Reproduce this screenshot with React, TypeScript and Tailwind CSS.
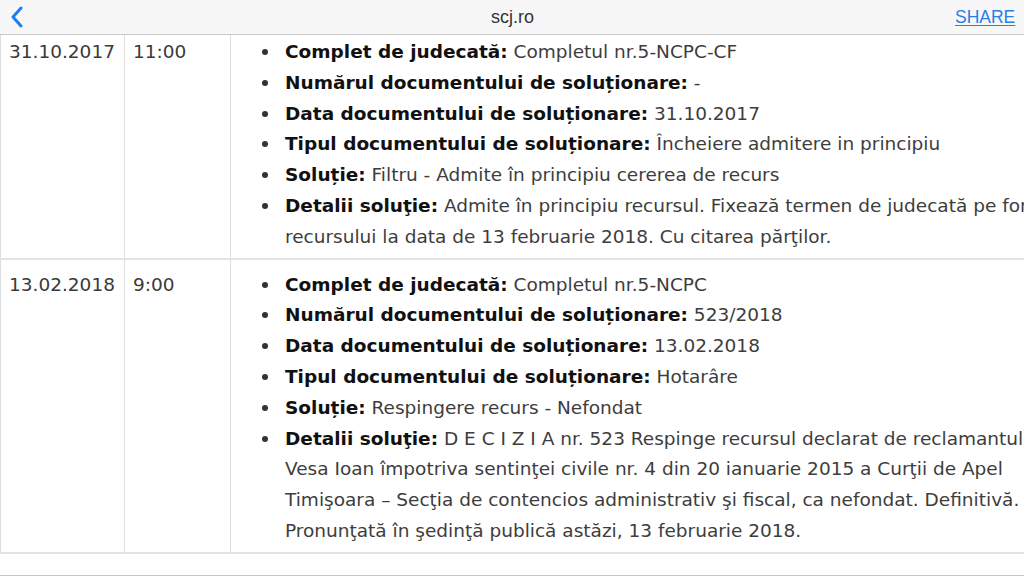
import type { ReactNode } from "react";

type Entry = {
  label: string;
  value: ReactNode;
};

type Session = {
  date: string;
  time: string;
  entries: Entry[];
  padTop: string;
};

const sessions: Session[] = [
  {
    date: "31.10.2017",
    time: "11:00",
    padTop: "pt-[2px]",
    entries: [
      { label: "Complet de judecată:", value: "Completul nr.5-NCPC-CF" },
      { label: "Numărul documentului de soluționare:", value: "-" },
      { label: "Data documentului de soluționare:", value: "31.10.2017" },
      {
        label: "Tipul documentului de soluționare:",
        value: "Încheiere admitere in principiu",
      },
      {
        label: "Soluție:",
        value: "Filtru - Admite în principiu cererea de recurs",
      },
      {
        label: "Detalii soluţie:",
        value:
          "Admite în principiu recursul. Fixează termen de judecată pe fondul recursului la data de 13 februarie 2018. Cu citarea părţilor.",
      },
    ],
  },
  {
    date: "13.02.2018",
    time: "9:00",
    padTop: "pt-[10px]",
    entries: [
      { label: "Complet de judecată:", value: "Completul nr.5-NCPC" },
      { label: "Numărul documentului de soluționare:", value: "523/2018" },
      { label: "Data documentului de soluționare:", value: "13.02.2018" },
      { label: "Tipul documentului de soluționare:", value: "Hotarâre" },
      { label: "Soluție:", value: "Respingere recurs - Nefondat" },
      {
        label: "Detalii soluţie:",
        value:
          "D E C I Z I A nr. 523 Respinge recursul declarat de reclamantul Vesa Ioan împotriva sentinţei civile nr. 4 din 20 ianuarie 2015 a Curţii de Apel Timişoara – Secţia de contencios administrativ şi fiscal, ca nefondat. Definitivă. Pronunţată în şedinţă publică astăzi, 13 februarie 2018.",
      },
    ],
  },
];

function TopBar() {
  return (
    <header className="flex h-[35px] items-center justify-between border-b border-[#c9c9c9] bg-[#f7f7f7] pl-[10px] pr-[9px] font-['Liberation_Sans',Arial,sans-serif]">
      <button className="flex w-[60px] items-center text-[#1a7ff5]">
        <svg width="14" height="22" viewBox="0 0 14 22" fill="none">
          <path
            d="M11 2 L3 11 L11 20"
            stroke="currentColor"
            strokeWidth="3"
            strokeLinecap="round"
            strokeLinejoin="round"
          />
        </svg>
      </button>
      <span className="text-[18px] text-[#333]">scj.ro</span>
      <a className="w-[60px] text-right text-[17.5px] text-[#2a7fe3] underline underline-offset-2">
        SHARE
      </a>
    </header>
  );
}

export default function App() {
  return (
    <div className="h-[576px] w-[1024px] overflow-hidden bg-white">
      <TopBar />

      <table className="w-[1080px] table-fixed border-collapse font-['DejaVu_Sans',Verdana,sans-serif] text-[18.5px] leading-[30.8px]">
        <colgroup>
          <col className="w-[124px]" />
          <col className="w-[106px]" />
          <col />
        </colgroup>
        <tbody>
          {sessions.map((s) => (
            <tr key={s.date} className="border-b-2 border-[#e2e2e2] align-top">
              <td
                className={`border-x border-[#dedede] pl-[8px] pr-[4px] pb-[5px] text-[#3a3a3a] ${s.padTop}`}
              >
                {s.date}
              </td>
              <td
                className={`border-x border-[#dedede] pl-[8px] pr-[4px] pb-[5px] text-[#3a3a3a] ${s.padTop}`}
              >
                {s.time}
              </td>
              <td
                className={`border-x border-[#dedede] pr-[9px] pb-[5px] ${s.padTop}`}
              >
                <ul className="pl-[54px] text-[#3d3d3d]">
                  {s.entries.map((e) => (
                    <li
                      key={e.label}
                      className="relative before:absolute before:left-[-23px] before:top-[12px] before:h-[6px] before:w-[6px] before:rounded-full before:bg-[#333] before:content-['']"
                    >
                      <strong className="font-bold text-[#111]">
                        {e.label}
                      </strong>{" "}
                      {e.value}
                    </li>
                  ))}
                </ul>
              </td>
            </tr>
          ))}
        </tbody>
      </table>

      <div className="mt-[21px] h-[10px] border-t border-[#c6c6c6] bg-[#f7f7f7]" />
    </div>
  );
}
